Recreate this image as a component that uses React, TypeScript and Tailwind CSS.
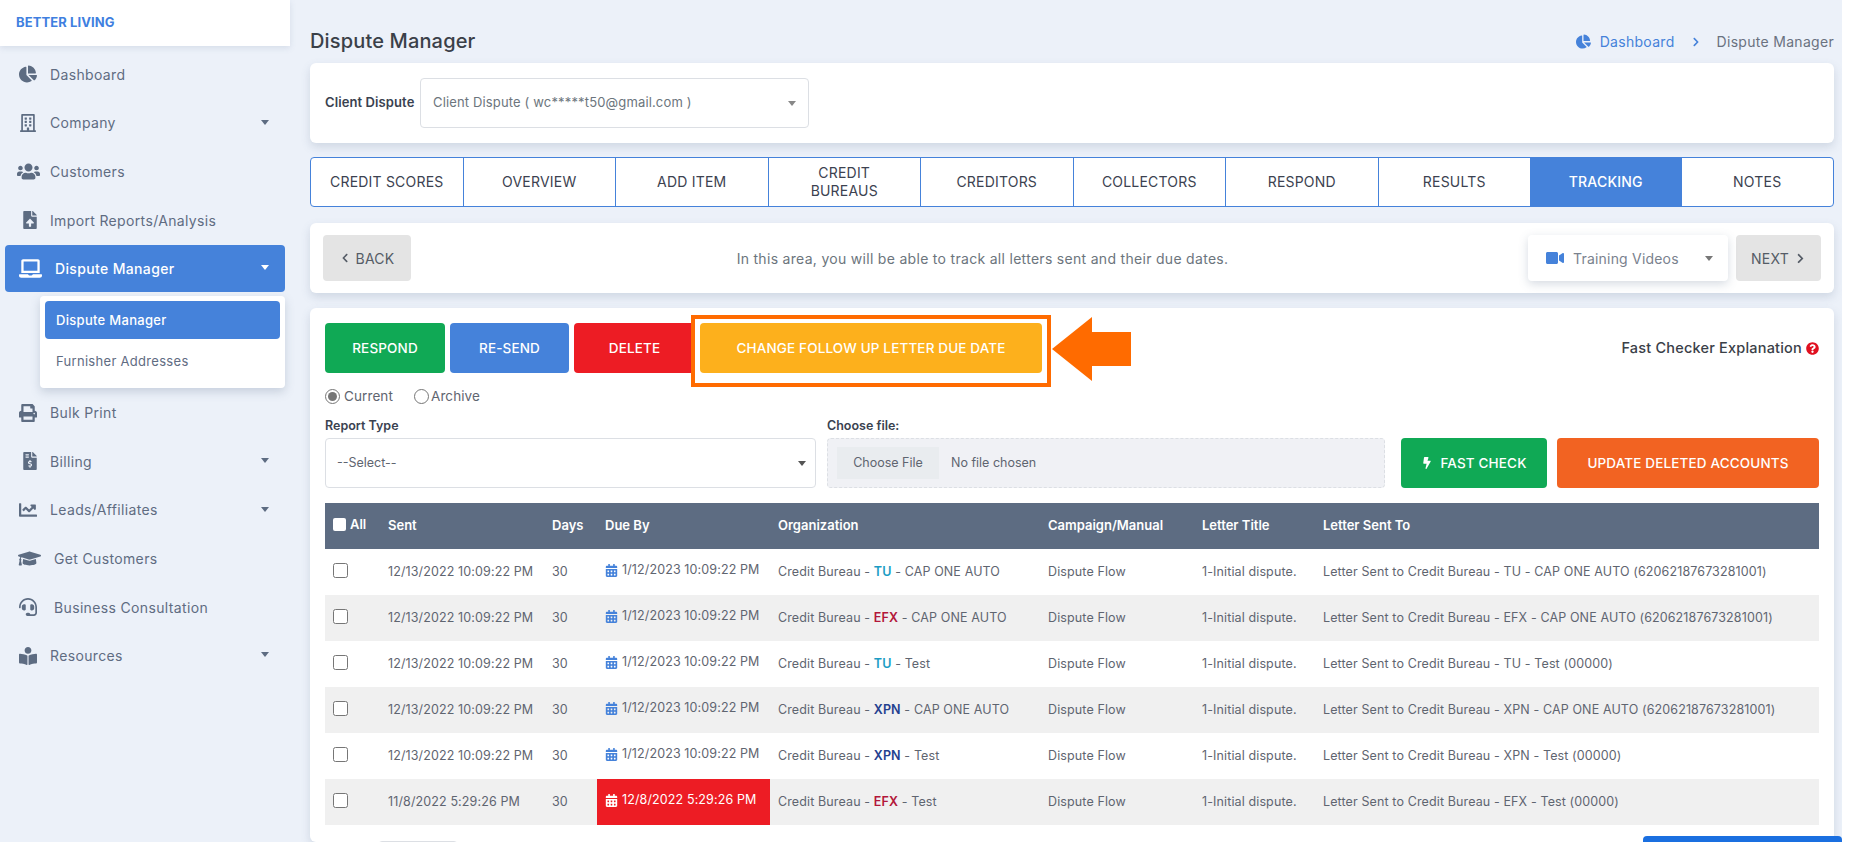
import React from "react";
import {
  FaChartPie, FaRegBuilding, FaUsers, FaFileUpload, FaLaptop, FaPrint, FaFileInvoiceDollar, FaChartLine,
  FaGraduationCap, FaHeadset, FaBookReader, FaVideo, FaChevronLeft, FaChevronRight, FaBolt, FaQuestionCircle,
  FaCalendarAlt, FaCaretDown,
} from "react-icons/fa";

const Caret = ({ className = "" }: { className?: string }) => (
  <span className={`inline-block w-0 h-0 border-x-[4.5px] border-x-transparent border-t-[5px] ${className}`} />
);

const NavItem = ({ icon, label, caret, indent }: { icon: React.ReactNode; label: string; caret?: boolean; indent?: boolean }) => (
  <div className="relative flex items-center h-[48.6px] text-[14px] tracking-[0.35px] text-[#5f6c82]">
    <span className="w-[50px] pl-[19px] shrink-0 flex items-center text-[#5d6c82] text-[18px]">{icon}</span>
    <span className={indent ? "pl-1" : ""}>{label}</span>
    {caret && <Caret className="absolute left-[261px] top-[21px] border-t-[#5d6c82]" />}
  </div>
);

const Sidebar = () => (
  <aside className="w-[290px] shrink-0">
    <div className="h-[46px] bg-white flex items-center pl-4 shadow-[0_2px_6px_rgba(90,110,140,0.15)] text-[13px] font-bold tracking-[0.1px] text-[#3f7fe0]">
      BETTER LIVING
    </div>
    <div className="pt-1">
      <NavItem icon={<FaChartPie />} label="Dashboard" />
      <NavItem icon={<FaRegBuilding />} label="Company" caret />
      <NavItem icon={<FaUsers className="text-[23px] -ml-[2px]" />} label="Customers" />
      <NavItem icon={<FaFileUpload className="ml-[2px]" />} label="Import Reports/Analysis" />
      <div className="relative ml-[5px] w-[280px] h-[47px] mt-[1px] rounded-[4px] bg-[#4582da] text-white flex items-center text-[14px] font-medium tracking-[0.35px]">
        <span className="w-[50px] pl-[14px] shrink-0 text-[23px]"><FaLaptop /></span>
        <span>Dispute Manager</span>
        <Caret className="absolute left-[256px] top-[20px] border-t-white" />
      </div>
      <div className="ml-[40px] mt-[4px] w-[245px] h-[92px] p-[5px] bg-white rounded-[4px] shadow-[0_4px_10px_rgba(90,110,140,0.25)] text-[13px] tracking-[0.3px]">
        <div className="h-[38px] rounded-[4px] bg-[#4582da] text-white font-medium flex items-center pl-[11px]">Dispute Manager</div>
        <div className="h-[44px] flex items-center pl-[11px] text-[#5f6c82]">Furnisher Addresses</div>
      </div>
      <NavItem icon={<FaPrint />} label="Bulk Print" />
      <NavItem icon={<FaFileInvoiceDollar className="ml-[2px]" />} label="Billing" caret />
      <NavItem icon={<FaChartLine />} label="Leads/Affiliates" caret />
      <NavItem icon={<FaGraduationCap className="text-[23px] -ml-[1px]" />} label="Get Customers" indent />
      <NavItem icon={<FaHeadset />} label="Business Consultation" indent />
      <NavItem icon={<FaBookReader />} label="Resources" caret />
    </div>
  </aside>
);

const tabs = ["CREDIT SCORES", "OVERVIEW", "ADD ITEM", "CREDIT BUREAUS", "CREDITORS", "COLLECTORS", "RESPOND", "RESULTS", "TRACKING", "NOTES"];

const Tabs = () => (
  <div className="mt-[14px] h-[50px] flex rounded-[4px] border border-[#4582da] bg-white overflow-hidden">
    {tabs.map((t, i) => (
      <div
        key={t}
        className={`flex-1 flex items-center justify-center text-center px-4 text-[14px] leading-[18px] tracking-[0.2px] ${
          t === "TRACKING" ? "bg-[#4582da] text-white font-medium" : "text-[#3c4250]"
        } ${i > 0 && t !== "TRACKING" && t !== "NOTES" ? "border-l border-[#4582da]" : ""}`}
      >
        {t}
      </div>
    ))}
  </div>
);

type Row = { sent: string; due: string; b: "TU" | "EFX" | "XPN"; org: string; to: string; late?: boolean };
const rows: Row[] = [
  { sent: "12/13/2022 10:09:22 PM", due: "1/12/2023 10:09:22 PM", b: "TU", org: "CAP ONE AUTO", to: "CAP ONE AUTO (62062187673281001)" },
  { sent: "12/13/2022 10:09:22 PM", due: "1/12/2023 10:09:22 PM", b: "EFX", org: "CAP ONE AUTO", to: "CAP ONE AUTO (62062187673281001)" },
  { sent: "12/13/2022 10:09:22 PM", due: "1/12/2023 10:09:22 PM", b: "TU", org: "Test", to: "Test (00000)" },
  { sent: "12/13/2022 10:09:22 PM", due: "1/12/2023 10:09:22 PM", b: "XPN", org: "CAP ONE AUTO", to: "CAP ONE AUTO (62062187673281001)" },
  { sent: "12/13/2022 10:09:22 PM", due: "1/12/2023 10:09:22 PM", b: "XPN", org: "Test", to: "Test (00000)" },
  { sent: "11/8/2022 5:29:26 PM", due: "12/8/2022 5:29:26 PM", b: "EFX", org: "Test", to: "Test (00000)", late: true },
];

const Bureau = ({ b }: { b: Row["b"] }) => (
  <b className={`font-semibold ${b === "TU" ? "text-[#1a9cc4]" : b === "EFX" ? "text-[#b3173a]" : "text-[#24408f]"}`}>{b}</b>
);

const Table = () => (
  <table className="mt-[15px] w-[1494px] table-fixed border-collapse text-[12.5px] tracking-[0.12px] text-[#5f6570]">
    <colgroup>
      <col className="w-[56px]" /><col className="w-[164px]" /><col className="w-[52px]" /><col className="w-[173px]" />
      <col className="w-[271px]" /><col className="w-[154px]" /><col className="w-[121px]" /><col className="w-[503px]" />
    </colgroup>
    <thead>
      <tr className="h-[46px] bg-[#5d6c82] text-white text-left text-[13px] font-semibold tracking-normal">
        <th className="pl-[8px] font-semibold">
          <span className="inline-flex items-center gap-[4px]">
            <span className="inline-block w-[13px] h-[13px] bg-white rounded-[2px]" />All
          </span>
        </th>
        <th className="pl-[7px] font-semibold">Sent</th>
        <th className="pl-[7px] font-semibold">Days</th>
        <th className="pl-[8px] font-semibold">Due By</th>
        <th className="pl-[8px] font-semibold">Organization</th>
        <th className="pl-[7px] font-semibold">Campaign/Manual</th>
        <th className="pl-[7px] font-semibold">Letter Title</th>
        <th className="pl-[7px] font-semibold">Letter Sent To</th>
      </tr>
    </thead>
    <tbody>
      {rows.map((r, i) => (
        <tr key={i} className={`h-[46px] ${i % 2 === 1 ? "bg-[#f0f0f0]" : "bg-white"}`}>
          <td className="pl-[8px]">
            <span className="block w-[15px] h-[15px] -mt-[3px] rounded-[2.5px] border border-[#767676] bg-white" />
          </td>
          <td className="pl-[7px] whitespace-nowrap">{r.sent}</td>
          <td className="pl-[7px]">30</td>
          <td className={`pl-[8px] whitespace-nowrap ${r.late ? "bg-[#ed1c24] text-white" : ""}`}>
            <span className="inline-flex items-center gap-[4px]">
              <FaCalendarAlt className={`text-[13px] ${r.late ? "text-white" : "text-[#4582da]"}`} />
              {r.due}
            </span>
          </td>
          <td className="pl-[8px] whitespace-nowrap">
            Credit Bureau - <Bureau b={r.b} /> - {r.org}
          </td>
          <td className="pl-[7px] whitespace-nowrap">Dispute Flow</td>
          <td className="pl-[7px] whitespace-nowrap">1-Initial dispute.</td>
          <td className="pl-[7px] whitespace-nowrap">Letter Sent to Credit Bureau - {r.b} - {r.to}</td>
        </tr>
      ))}
    </tbody>
  </table>
);

const Btn = ({ className, children }: { className: string; children: React.ReactNode }) => (
  <div className={`h-[50px] rounded-[4px] flex items-center justify-center text-white text-[13.5px] font-medium tracking-[0.15px] ${className}`}>{children}</div>
);

export default function App() {
  return (
    <div className="w-[1862px] h-[842px] overflow-hidden bg-white font-['Inter',sans-serif] relative">
      <div className="w-[1842px] h-[842px] bg-[#ecf1f9] flex overflow-hidden">
        <Sidebar />
        <main className="ml-[20px] w-[1524px] shrink-0 flex flex-col">
          <div className="h-[63px] flex items-end pb-[10px] justify-between">
            <h1 className="text-[20px] leading-[24px] font-medium tracking-[0.15px] text-[#3a4048]">Dispute Manager</h1>
            <div className="flex items-center text-[14px] tracking-[0.3px] text-[#6a7280] pb-[1px]">
              <FaChartPie className="text-[#4582da] text-[15px] mr-[9px]" />
              <span className="text-[#4582da]">Dashboard</span>
              <FaChevronRight className="text-[#4582da] text-[10px] mx-[16px]" />
              <span>Dispute Manager</span>
            </div>
          </div>

          <section className="h-[80px] rounded-[6px] bg-white shadow-[0_4px_10px_rgba(90,110,140,0.2)] flex items-center pl-[15px]">
            <span className="w-[95px] text-[13px] font-semibold tracking-[0.1px] text-[#3a4250] whitespace-nowrap">Client Dispute</span>
            <div className="relative w-[389px] h-[50px] rounded-[4px] border border-[#dcdfe4] flex items-center pl-[12px] text-[13px] tracking-[0.15px] text-[#6c757d]">
              Client Dispute ( wc*****t50@gmail.com )
              <Caret className="absolute right-[12px] top-[22px] border-t-[#888]" />
            </div>
          </section>

          <Tabs />

          <section className="mt-[16px] h-[70px] rounded-[6px] bg-white shadow-[0_4px_10px_rgba(90,110,140,0.2)] flex items-center pl-[13px] pr-[13px]">
            <div className="w-[88px] h-[46px] rounded-[4px] bg-[#e4e4e4] flex items-center justify-center gap-[6px] text-[14px] tracking-[0.2px] text-[#555c66]">
              <FaChevronLeft className="text-[10px]" />BACK
            </div>
            <div className="flex-1 text-center pl-[26px] pr-[0px] text-[14px] tracking-[0.3px] text-[#6c757d]">
              In this area, you will be able to track all letters sent and their due dates.
            </div>
            <div className="relative w-[200px] h-[46px] rounded-[4px] bg-white shadow-[0_3px_10px_rgba(90,110,140,0.25)] flex items-center pl-[18px] text-[14px] tracking-[0.2px] text-[#7a828e]">
              <FaVideo className="text-[#4582da] text-[18px] mr-[9px]" />Training Videos
              <Caret className="absolute left-[177px] top-[21px] border-t-[#777]" />
            </div>
            <div className="ml-[8px] w-[85px] h-[46px] rounded-[4px] bg-[#e4e4e4] flex items-center justify-center gap-[6px] text-[14px] tracking-[0.2px] text-[#555c66]">
              NEXT<FaChevronRight className="text-[11px]" />
            </div>
          </section>

          <section className="relative mt-[15px] flex-1 min-h-[534px] rounded-[6px] bg-white shadow-[0_4px_10px_rgba(90,110,140,0.2)] px-[15px] pt-[15px]">
            <div className="flex items-center gap-[5px]">
              <Btn className="w-[120px] bg-[#10a955]">RESPOND</Btn>
              <Btn className="w-[119px] bg-[#4582da]">RE-SEND</Btn>
              <Btn className="w-[121px] bg-[#ed1c24]">DELETE</Btn>
              <Btn className="w-[342px] bg-[#fdb01c]">CHANGE FOLLOW UP LETTER DUE DATE</Btn>
              <div className="ml-auto flex items-center gap-[4px] text-[14.5px] font-medium tracking-[0.2px] text-[#3a4048]">
                Fast Checker Explanation <FaQuestionCircle className="text-[#e01020] text-[13px]" />
              </div>
            </div>

            <div className="mt-[14px] h-[18px] flex items-center text-[13.5px] tracking-[0.1px] text-[#5f6570]">
              <span className="w-[15px] h-[15px] rounded-full border border-[#767676] flex items-center justify-center mr-[4px]">
                <span className="w-[9px] h-[9px] rounded-full bg-[#767676]" />
              </span>
              Current
              <span className="ml-[21px] w-[15px] h-[15px] rounded-full border border-[#767676] mr-[2px]" />
              Archive
            </div>

            <div className="mt-[12px] flex items-end">
              <div className="w-[491px]">
                <div className="text-[12.5px] font-semibold leading-[18px] mb-[3px] text-[#3a4250]">Report Type</div>
                <div className="relative h-[50px] rounded-[4px] border border-[#dcdfe4] flex items-center pl-[11px] text-[12.5px] text-[#5f6570]">
                  --Select--
                  <Caret className="absolute right-[9px] top-[22px] border-t-[#555]" />
                </div>
              </div>
              <div className="ml-[11px] w-[558px]">
                <div className="text-[12.5px] font-semibold leading-[18px] mb-[3px] text-[#3a4250]">Choose file:</div>
                <div className="h-[50px] rounded-[4px] border border-dashed border-[#dcdfe4] bg-[#f0f1f5] flex items-center pl-[9px] text-[12.5px] text-[#5f6570]">
                  <span className="w-[102px] h-[32px] bg-[#e9ecef] flex items-center justify-center">Choose File</span>
                  <span className="ml-[12px]">No file chosen</span>
                </div>
              </div>
              <Btn className="ml-[16px] w-[146px] gap-[7px] bg-[#10a955]"><FaBolt className="text-[12px]" />FAST CHECK</Btn>
              <Btn className="ml-[10px] w-[262px] bg-[#f26322]">UPDATE DELETED ACCOUNTS</Btn>
            </div>

            <Table />

            <div className="mt-[16px] ml-[53px] w-[80px] h-[30px] rounded-[4px] border border-[#dcdfe4]" />

            <div className="absolute left-[381px] top-[7px] w-[360px] h-[72px] border-4 border-[#ff6b00]" />
            <svg className="absolute left-[742px] top-[6px]" width="80" height="70" viewBox="0 0 80 70">
              <path d="M0 35 L40 3 L40 18 L79 18 L79 52 L40 52 L40 67 Z" fill="#ff6b00" />
            </svg>
          </section>
        </main>
      </div>
      <div className="absolute left-[1643px] top-[836px] w-[199px] h-[10px] rounded-t-[4px] bg-[#1a6fe0]" />
    </div>
  );
}
